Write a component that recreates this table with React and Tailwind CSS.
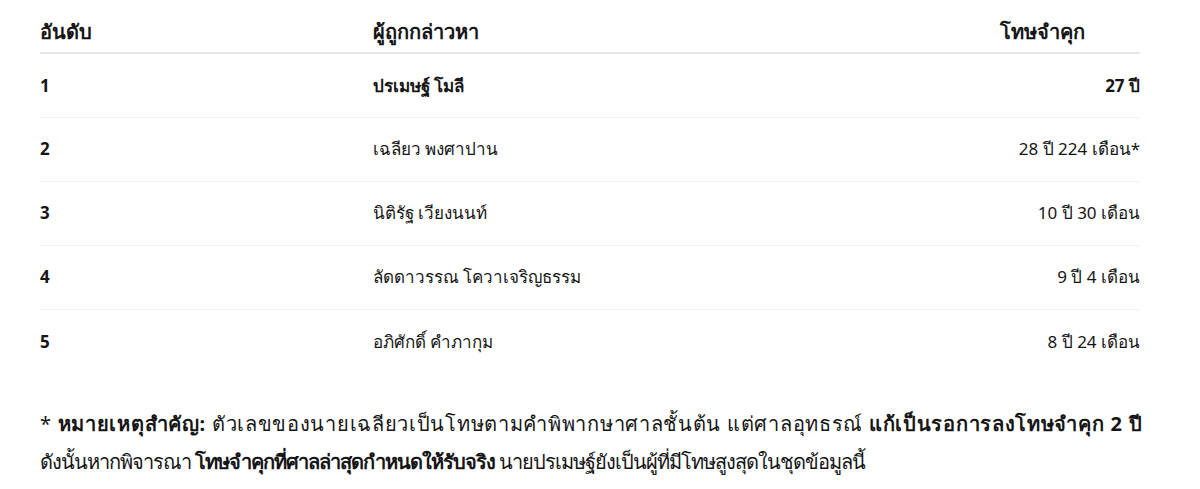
import React from "react";

const rows = [
  { rank: "1", name: "ปรเมษฐ์ โมลี", term: "27 ปี", bold: true },
  { rank: "2", name: "เฉลียว พงศาปาน", term: "28 ปี 224 เดือน*" },
  { rank: "3", name: "นิติรัฐ เวียงนนท์", term: "10 ปี 30 เดือน" },
  { rank: "4", name: "ลัดดาวรรณ โควาเจริญธรรม", term: "9 ปี 4 เดือน" },
  { rank: "5", name: "อภิศักดิ์ คำภากุม", term: "8 ปี 24 เดือน" },
];

export default function App() {
  return (
    <div
      className="min-h-screen bg-white px-10 text-[17px] text-[#151515]"
      style={{ fontFamily: '"Noto Sans", sans-serif' }}
    >
      <table className="w-[1100px] border-collapse">
        <colgroup>
          <col className="w-[333px]" />
          <col className="w-[627px]" />
          <col className="w-[140px]" />
        </colgroup>
        <thead>
          <tr className="border-b-2 border-[#e6e6e6]">
            <th className="h-[53px] pt-3 text-left text-[20px] font-semibold">อันดับ</th>
            <th className="h-[53px] pt-3 text-left text-[20px] font-semibold">ผู้ถูกกล่าวหา</th>
            <th className="h-[53px] pt-3 text-left text-[20px] font-semibold">โทษจำคุก</th>
          </tr>
        </thead>
        <tbody>
          {rows.map((r, i) => (
            <tr
              key={r.rank}
              className={i < rows.length - 1 ? "border-b border-[#f1f1f1]" : ""}
            >
              <td className="h-[64px] font-bold">{r.rank}</td>
              <td className={`h-[64px] ${r.bold ? "font-bold" : ""}`}>{r.name}</td>
              <td className={`h-[64px] text-right whitespace-nowrap ${r.bold ? "font-bold" : ""}`}>
                {r.term}
              </td>
            </tr>
          ))}
        </tbody>
      </table>

      {/* footnote: per-line tracking to follow the reference line lengths */}
      <p className="mt-[32px] w-[1120px] text-[20px] leading-[38px]">
        <span className="tracking-[0.7px]">
          * <strong className="font-bold">หมายเหตุสำคัญ:</strong> ตัวเลขของนายเฉลียวเป็นโทษตามคำพิพากษาศาลชั้นต้น แต่ศาลอุทธรณ์{" "}
          <strong className="font-bold">แก้เป็นรอการลงโทษจำคุก 2 ปี</strong>
        </span>
        <br />
        <span className="tracking-[-1px]">
          ดังนั้นหากพิจารณา{" "}
          <strong className="font-bold">โทษจำคุกที่ศาลล่าสุดกำหนดให้รับจริง</strong>{" "}
          นายปรเมษฐ์ยังเป็นผู้ที่มีโทษสูงสุดในชุดข้อมูลนี้
        </span>
      </p>
    </div>
  );
}
